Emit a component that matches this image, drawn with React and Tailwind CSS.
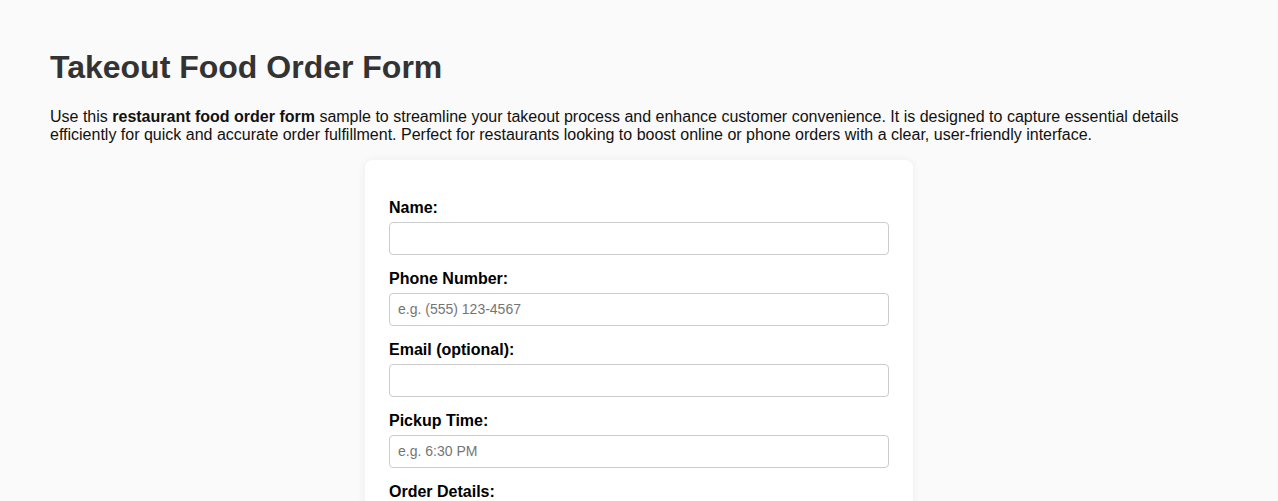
export default function App() {
  const fields = [
    { label: "Name:", placeholder: "" },
    { label: "Phone Number:", placeholder: "e.g. (555) 123-4567" },
    { label: "Email (optional):", placeholder: "" },
    { label: "Pickup Time:", placeholder: "e.g. 6:30 PM" },
  ];

  return (
    <div className="min-h-[501px] bg-[#fafafa] px-[50px] pt-[49px] font-['Liberation_Sans',Arial,sans-serif] text-black">
      <h1 className="text-[32px] leading-[37px] font-bold text-[#333]">Takeout Food Order Form</h1>

      <p className="mt-[22px] text-[16px] leading-[18px] text-[#111]">
        Use this <b>restaurant food order form</b> sample to streamline your takeout process and enhance customer
        convenience. It is designed to capture essential details efficiently for quick and accurate order fulfillment.
        Perfect for restaurants looking to boost online or phone orders with a clear, user-friendly interface.
      </p>

      <div className="mx-auto mt-[16px] w-[548px] rounded-lg bg-white px-6 pt-[39px] pb-6 shadow-[0_0_8px_rgba(0,0,0,0.06)]">
        {fields.map((f) => (
          <div key={f.label} className="mb-[15px]">
            <label className="block text-[16px] leading-[18px] font-bold">{f.label}</label>
            <input
              type="text"
              placeholder={f.placeholder}
              className="mt-[5px] block h-[33px] w-full rounded border border-[#ccc] bg-white px-2 pb-px text-[14px] placeholder:text-[#757575] outline-none"
            />
          </div>
        ))}
        <label className="block text-[16px] leading-[18px] font-bold">Order Details:</label>
        <textarea className="mt-[5px] block h-[80px] w-full rounded border border-[#ccc] px-2 text-[14px]" />
      </div>
    </div>
  );
}
